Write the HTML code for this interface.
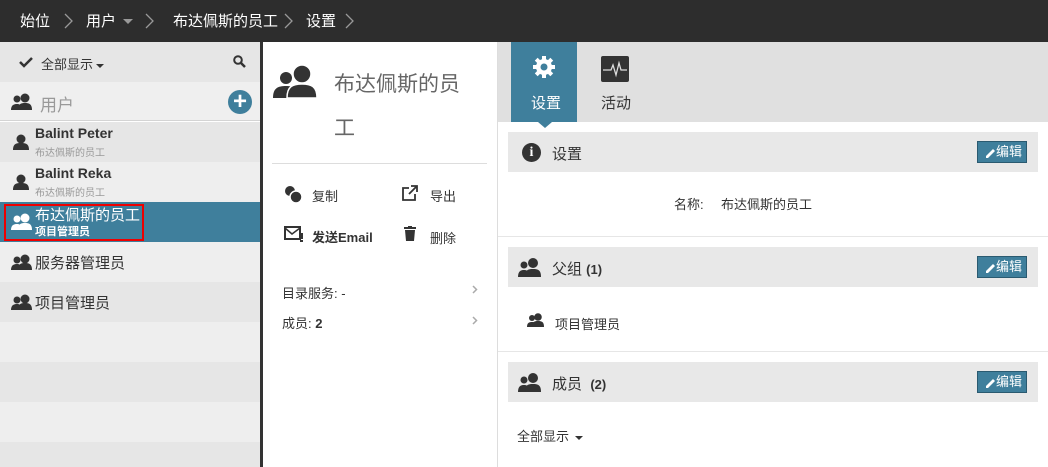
<!DOCTYPE html>
<html><head><meta charset="utf-8"><style>
*{margin:0;padding:0;box-sizing:border-box}
html,body{width:1048px;height:467px;overflow:hidden}
body{position:relative;background:#fff;font-family:"Liberation Sans","Noto Sans CJK SC",sans-serif;color:#333;font-size:13px}
.a{position:absolute}
.top{left:0;top:0;width:1048px;height:42px;background:#2d2d2d;color:#fff;font-size:15px}
.top span{position:absolute;top:10px}
.top svg{position:absolute;top:13px}
.tri{display:inline-block;width:0;height:0;border-left:4px solid transparent;border-right:4px solid transparent;border-top:4px solid #333;vertical-align:middle;margin-left:3px}
.row{position:absolute;left:0;width:261px;height:40px}
.e6{background:#e6e6e6}.ee{background:#eeeeee}
.btn{position:absolute;left:977px;width:50px;height:22px;background:#3f7f9c;border:1px solid #2a5a70;color:#fff;font-size:13px;line-height:20px;padding-left:18px}
.sec{position:absolute;left:508px;width:530px;height:40px;background:#e8e8e8}
</style></head><body>
<div class="a top">
<span style="left:20px">始位</span><svg style="left:64px" width="9" height="16"><path d="M1 1l7 7-7 7" fill="none" stroke="#999" stroke-width="1.3"/></svg>
<span style="left:86px">用户</span><span style="left:123px;top:19px;width:0;height:0;border-left:5px solid transparent;border-right:5px solid transparent;border-top:5px solid #999"></span><svg style="left:145px" width="9" height="16"><path d="M1 1l7 7-7 7" fill="none" stroke="#999" stroke-width="1.3"/></svg>
<span style="left:173px">布达佩斯的员工</span><svg style="left:284px" width="9" height="16"><path d="M1 1l7 7-7 7" fill="none" stroke="#999" stroke-width="1.3"/></svg>
<span style="left:306px">设置</span><svg style="left:345px" width="9" height="16"><path d="M1 1l7 7-7 7" fill="none" stroke="#999" stroke-width="1.3"/></svg>
</div>
<!-- left -->
<div class="row e6" style="top:42px;height:40px"></div>
<svg class="a" style="left:19px;top:56px" width="14" height="12"><path d="M1 6l4 4 8-8" fill="none" stroke="#333" stroke-width="2.5"/></svg>
<div class="a" style="left:41px;top:54px">全部显示<span class="tri"></span></div>
<svg class="a" style="left:233px;top:55px" width="13" height="13"><circle cx="5" cy="5" r="3.8" fill="none" stroke="#333" stroke-width="2"/><path d="M8 8l4 4" stroke="#333" stroke-width="2.5"/></svg>
<div class="row" style="top:82px;height:39px;background:#efefef;border-bottom:1px solid #d4d4d4"></div>
<svg class="a" style="left:11px;top:93px" width="22" height="18"><circle cx="6" cy="6" r="3.5" fill="#333"/><path d="M0 17c0-5 3-6 6-6s4 1 4 6z" fill="#333"/><circle cx="14" cy="5" r="4.5" fill="#333"/><path d="M7 17c0-6 3-7 7-7s7 1 7 7z" fill="#333"/></svg>
<div class="a" style="left:40px;top:91px;font-size:17px;color:#999">用户</div>
<div class="a" style="left:228px;top:90px;width:24px;height:24px;border-radius:50%;background:#3f7f9c;color:#fff;font-size:24px;line-height:23px;text-align:center;font-weight:bold">+</div>
<div class="row e6" style="top:122px"></div>
<div class="row ee" style="top:162px"></div>
<div class="row" style="top:202px;background:#3f7f9c"></div>
<div class="row ee" style="top:242px"></div>
<div class="row e6" style="top:282px"></div>
<div class="row ee" style="top:322px"></div>
<div class="row e6" style="top:362px"></div>
<div class="row ee" style="top:402px"></div>
<div class="row e6" style="top:442px;height:25px"></div>
<svg class="a" style="left:13px;top:134px" width="16" height="16"><circle cx="8" cy="5" r="4.5" fill="#333"/><path d="M0 16c0-6 3-7 8-7s8 1 8 7z" fill="#333"/></svg>
<div class="a" style="left:35px;top:125px;font-weight:bold;font-size:14px">Balint Peter</div>
<div class="a" style="left:35px;top:144px;font-size:10px;color:#999">布达佩斯的员工</div>
<svg class="a" style="left:13px;top:174px" width="16" height="16"><circle cx="8" cy="5" r="4.5" fill="#333"/><path d="M0 16c0-6 3-7 8-7s8 1 8 7z" fill="#333"/></svg>
<div class="a" style="left:35px;top:165px;font-weight:bold;font-size:14px">Balint Reka</div>
<div class="a" style="left:35px;top:184px;font-size:10px;color:#999">布达佩斯的员工</div>
<div class="a" style="left:4px;top:204px;width:140px;height:37px;border:2px solid #e00"></div>
<svg class="a" style="left:11px;top:213px" width="22" height="18"><circle cx="6" cy="6" r="3.5" fill="#fff"/><path d="M0 17c0-5 3-6 6-6s4 1 4 6z" fill="#fff"/><circle cx="14" cy="5" r="4.5" fill="#fff"/><path d="M7 17c0-6 3-7 7-7s7 1 7 7z" fill="#fff"/></svg>
<div class="a" style="left:35px;top:204px;color:#fff;font-size:15px">布达佩斯的员工</div>
<div class="a" style="left:35px;top:223px;color:#fff;font-size:11px;font-weight:bold">项目管理员</div>
<svg class="a" style="left:11px;top:254px" width="22" height="16"><circle cx="6" cy="6" r="3.5" fill="#333"/><path d="M0 16c0-5 3-6 6-6s4 1 4 6z" fill="#333"/><circle cx="14" cy="5" r="4.5" fill="#333"/><path d="M7 16c0-6 3-7 7-7s7 1 7 7z" fill="#333"/></svg>
<div class="a" style="left:35px;top:252px;font-size:15px">服务器管理员</div>
<svg class="a" style="left:11px;top:294px" width="22" height="16"><circle cx="6" cy="6" r="3.5" fill="#333"/><path d="M0 16c0-5 3-6 6-6s4 1 4 6z" fill="#333"/><circle cx="14" cy="5" r="4.5" fill="#333"/><path d="M7 16c0-6 3-7 7-7s7 1 7 7z" fill="#333"/></svg>
<div class="a" style="left:35px;top:292px;font-size:15px">项目管理员</div>
<div class="a" style="left:260px;top:42px;width:3px;height:425px;background:#333"></div>
<!-- middle -->
<svg class="a" style="left:273px;top:64px" width="46" height="34"><circle cx="13" cy="14" r="6" fill="#333"/><path d="M0 34c0-10 5-12 13-12s9 2 9 12z" fill="#333"/><circle cx="29" cy="10" r="9" fill="#333" stroke="#fff" stroke-width="1.5"/><path d="M14 34c0-12 6-14 15-14s15 2 15 14z" fill="#333" stroke="#fff" stroke-width="1.5"/></svg>
<div class="a" style="left:334px;top:63px;font-size:21px;color:#666;line-height:44px;width:145px">布达佩斯的员<br>工</div>
<div class="a" style="left:272px;top:163px;width:215px;height:1px;background:#ddd"></div>
<svg class="a" style="left:284px;top:185px" width="18" height="18"><circle cx="6" cy="6" r="5" fill="#333"/><circle cx="12" cy="12" r="6" fill="#333" stroke="#fff" stroke-width="1.5"/></svg>
<div class="a" style="left:312px;top:186px">复制</div>
<svg class="a" style="left:402px;top:185px" width="16" height="16"><path d="M7 3H1v12h12V9" fill="none" stroke="#333" stroke-width="1.8"/><path d="M9 1h6v6M15 1L7 9" fill="none" stroke="#333" stroke-width="1.8"/></svg>
<div class="a" style="left:430px;top:186px">导出</div>
<svg class="a" style="left:284px;top:225px" width="20" height="18"><rect x="1" y="2" width="15" height="12" fill="none" stroke="#333" stroke-width="2"/><path d="M1 3l7 6 8-6" fill="none" stroke="#333" stroke-width="1.5"/><rect x="16" y="8" width="3" height="6" fill="#333"/><rect x="16" y="15" width="3" height="2" fill="#333"/></svg>
<div class="a" style="left:312px;top:227px;font-weight:bold">发送Email</div>
<svg class="a" style="left:404px;top:226px" width="12" height="15"><rect x="0" y="1" width="12" height="2" fill="#333"/><rect x="4" y="0" width="4" height="2" fill="#333"/><path d="M1 4h10l-1 11H2z" fill="#333"/></svg>
<div class="a" style="left:430px;top:228px">删除</div>
<div class="a" style="left:282px;top:283px">目录服务: -</div>
<svg class="a" style="left:472px;top:285px" width="6" height="9"><path d="M1 1l3.5 3.5L1 8" fill="none" stroke="#aaa" stroke-width="1.5"/></svg>
<div class="a" style="left:282px;top:313px">成员: <b>2</b></div>
<svg class="a" style="left:472px;top:316px" width="6" height="9"><path d="M1 1l3.5 3.5L1 8" fill="none" stroke="#aaa" stroke-width="1.5"/></svg>
<div class="a" style="left:497px;top:42px;width:1px;height:425px;background:#ddd"></div>
<!-- right -->
<div class="a" style="left:498px;top:42px;width:550px;height:80px;background:#e0e0e0"></div>
<div class="a" style="left:511px;top:42px;width:66px;height:80px;background:#3f7f9c"></div>
<div class="a" style="left:538px;top:122px;width:0;height:0;border-left:7px solid transparent;border-right:7px solid transparent;border-top:6px solid #3f7f9c"></div>
<svg class="a" style="left:532px;top:55px" width="24" height="24" viewBox="0 0 24 24"><g fill="#fff"><circle cx="12" cy="12" r="8"/><rect x="10" y="1" width="4" height="22"/><rect x="1" y="10" width="22" height="4"/><rect x="10" y="1" width="4" height="22" transform="rotate(45 12 12)"/><rect x="10" y="1" width="4" height="22" transform="rotate(-45 12 12)"/></g><circle cx="12" cy="12" r="3.5" fill="#3f7f9c"/></svg>
<div class="a" style="left:531px;top:92px;color:#fff;font-size:15px">设置</div>
<svg class="a" style="left:601px;top:56px" width="28" height="26"><rect width="28" height="26" rx="2" fill="#333"/><path d="M2 14h8l2-5 3 10 3-12 2 7h6" fill="none" stroke="#ddd" stroke-width="1.3"/></svg>
<div class="a" style="left:601px;top:92px;font-size:15px">活动</div>
<div class="sec" style="top:132px"></div>
<div class="a" style="left:522px;top:143px;width:19px;height:19px;border-radius:50%;background:#333;color:#fff;font-weight:bold;font-size:14px;text-align:center;line-height:19px;font-family:'Liberation Serif',serif">i</div>
<div class="a" style="left:552px;top:143px;font-size:15px">设置</div>
<div class="btn" style="top:141px">编辑</div>
<div class="a" style="left:674px;top:194px">名称:</div>
<div class="a" style="left:721px;top:194px">布达佩斯的员工</div>
<div class="a" style="left:498px;top:236px;width:550px;height:1px;background:#e6e6e6"></div>
<div class="sec" style="top:247px"></div>
<svg class="a" style="left:518px;top:258px" width="24" height="19"><circle cx="6" cy="7" r="3.5" fill="#333"/><path d="M0 19c0-6 3-7 6-7s5 1 5 7z" fill="#333"/><circle cx="15" cy="5" r="5" fill="#333"/><path d="M7 19c0-7 3-8 8-8s8 1 8 8z" fill="#333"/></svg>
<div class="a" style="left:552px;top:258px;font-size:15px">父组 <b style="font-size:13px">(1)</b></div>
<div class="btn" style="top:256px">编辑</div>
<svg class="a" style="left:527px;top:313px" width="18" height="14"><circle cx="5" cy="5" r="3" fill="#333"/><path d="M0 14c0-4 2-5 5-5s4 1 4 5z" fill="#333"/><circle cx="11" cy="4" r="3.8" fill="#333"/><path d="M5 14c0-5 2-6 6-6s6 1 6 6z" fill="#333"/></svg>
<div class="a" style="left:555px;top:314px">项目管理员</div>
<div class="a" style="left:498px;top:351px;width:550px;height:1px;background:#e6e6e6"></div>
<div class="sec" style="top:362px"></div>
<svg class="a" style="left:518px;top:373px" width="24" height="19"><circle cx="6" cy="7" r="3.5" fill="#333"/><path d="M0 19c0-6 3-7 6-7s5 1 5 7z" fill="#333"/><circle cx="15" cy="5" r="5" fill="#333"/><path d="M7 19c0-7 3-8 8-8s8 1 8 8z" fill="#333"/></svg>
<div class="a" style="left:552px;top:373px;font-size:15px">成员 &nbsp;<b style="font-size:13px">(2)</b></div>
<div class="btn" style="top:371px">编辑</div>
<div class="a" style="left:517px;top:426px">全部显示<span class="tri" style="margin-left:6px"></span></div>
<svg class="a" style="left:984px;top:146px" width="12" height="12"><path d="M2 10l7-7 2 2-7 7H2z" fill="#fff"/></svg>
<svg class="a" style="left:984px;top:261px" width="12" height="12"><path d="M2 10l7-7 2 2-7 7H2z" fill="#fff"/></svg>
<svg class="a" style="left:984px;top:376px" width="12" height="12"><path d="M2 10l7-7 2 2-7 7H2z" fill="#fff"/></svg>
</body></html>
